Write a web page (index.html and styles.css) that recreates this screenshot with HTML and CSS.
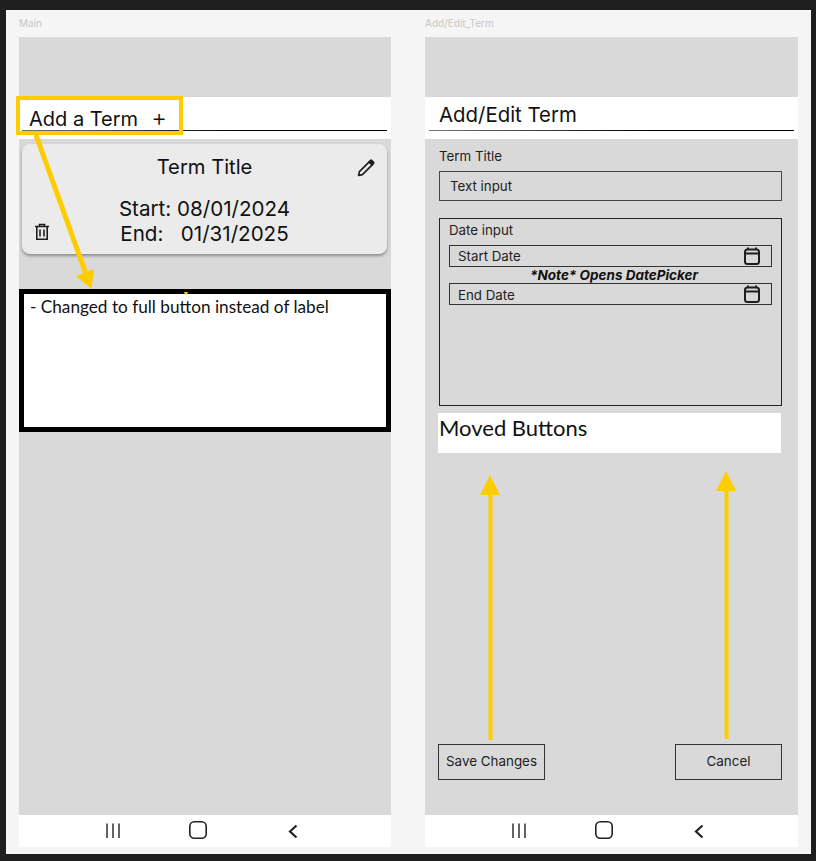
FILE: index.html
```html
<!DOCTYPE html>
<html lang="en">
<head>
    <meta charset="UTF-8">
    <meta name="viewport" content="width=device-width, initial-scale=1.0">
    <title>Term screens</title>
    <link rel="stylesheet" href="styles.css">
</head>
<body>
    <div class="canvas">
        <div class="frame frame-main">
            <div class="frame-name">Main</div>
            <div class="phone">
                <div class="status"></div>
                <div class="header">
                    <div class="header-line">
                        <span class="add-term">Add a Term<span class="plus">+</span></span>
                    </div>
                </div>
                <div class="content">
                    <div class="card">
                        <div class="card-title">Term Title</div>
                        <svg class="icon-edit" width="20" height="20" viewBox="0 0 20 20" fill="none" stroke="#1e1e1e" stroke-width="1.7" stroke-linejoin="round">
                            <path d="M2.6 17.4l.8-3.8 9.8-9.8 3 3-9.8 9.8z"/>
                            <path d="M13.2 3.8l1.2-1.2a1 1 0 0 1 1.4 0l1.6 1.6a1 1 0 0 1 0 1.4l-1.2 1.2z" fill="#1e1e1e"/>
                        </svg>
                        <svg class="icon-trash" width="16" height="18" viewBox="0 0 16 18" fill="none" stroke="#1e1e1e" stroke-width="1.6">
                            <path d="M1 3.5h14M5.5 3.5V1.500h5v2M2.800 3.500v12.700h10.400V3.500M6 6.500v7M10 6.500v7"/>
                        </svg>
                        <div class="card-dates">
                            <div>Start: 08/01/2024</div>
                            <div class="end-date">End:   01/31/2025</div>
                        </div>
                    </div>
                </div>
                <div class="nav">
                    <svg class="nav-icon" width="24" height="24" viewBox="0 0 24 24" fill="none" stroke="#222" stroke-width="1.400"><path d="M6 4.500v14.500M12 4.500v14.500M18 4.500v14.500"/></svg>
                    <svg class="nav-icon nav-home" width="24" height="24" viewBox="0 0 24 24" fill="none" stroke="#222" stroke-width="1.600"><rect x="3.800" y="2.800" width="16.400" height="16.400" rx="4.500"/></svg>
                    <svg class="nav-icon nav-back" width="24" height="24" viewBox="0 0 24 24" fill="none" stroke="#222" stroke-width="2.200"><path d="M15.500 6.500l-6.500 6 6.500 6"/></svg>
                </div>

                <div class="highlight-box"></div>
                <div class="note-box">- Changed to full button instead of label</div>
            </div>
        </div>

        <div class="frame frame-edit">
            <div class="frame-name">Add/Edit_Term</div>
            <div class="phone">
                <div class="status"></div>
                <div class="header">
                    <div class="header-line">
                        <span class="page-title">Add/Edit Term</span>
                    </div>
                </div>
                <div class="content form">
                    <label class="field-label">Term Title</label>
                    <div class="text-input">Text input</div>
                    <div class="date-group">
                        <div class="date-label">Date input</div>
                        <div class="date-input">
                            <span>Start Date</span>
                            <svg width="18" height="18" viewBox="0 0 18 18" fill="none" stroke="#1e1e1e" stroke-width="2"><rect x="2" y="2.500" width="14" height="14.500" rx="2.500"/><path d="M2 6.500h14M5 2.500V0.500M13 2.500V0.500"/></svg>
                        </div>
                        <div class="date-note">*Note* Opens DatePicker</div>
                        <div class="date-input">
                            <span class="end-label">End Date</span>
                            <svg width="18" height="18" viewBox="0 0 18 18" fill="none" stroke="#1e1e1e" stroke-width="2"><rect x="2" y="2.500" width="14" height="14.500" rx="2.500"/><path d="M2 6.500h14M5 2.500V0.500M13 2.500V0.500"/></svg>
                        </div>
                    </div>
                    <div class="form-buttons">
                        <div class="form-button">Save Changes</div>
                        <div class="form-button">Cancel</div>
                    </div>
                </div>
                <div class="nav">
                    <svg class="nav-icon" width="24" height="24" viewBox="0 0 24 24" fill="none" stroke="#222" stroke-width="1.400"><path d="M6 4.500v14.500M12 4.500v14.500M18 4.500v14.500"/></svg>
                    <svg class="nav-icon nav-home" width="24" height="24" viewBox="0 0 24 24" fill="none" stroke="#222" stroke-width="1.600"><rect x="3.800" y="2.800" width="16.400" height="16.400" rx="4.500"/></svg>
                    <svg class="nav-icon nav-back" width="24" height="24" viewBox="0 0 24 24" fill="none" stroke="#222" stroke-width="2.200"><path d="M15.500 6.500l-6.500 6 6.500 6"/></svg>
                </div>

                <div class="moved-box">Moved Buttons</div>
            </div>
        </div>

        <!-- arrows drawn on top of both frames, page coordinates minus canvas offset -->
        <svg class="arrows" width="805" height="844" viewBox="6 10 805 844" fill="#ffcc00" stroke="none">
            <path d="M36 135L86 274" stroke="#ffcc00" stroke-width="5"/>
            <path d="M76 276L94 269L91.500 289z"/>
            <path d="M184 292h4l-1 2.500h-2z"/>
            <path d="M490.500 740V494" stroke="#ffcc00" stroke-width="4"/>
            <path d="M490 475L500 495H480z"/>
            <path d="M726.500 739V490" stroke="#ffcc00" stroke-width="4"/>
            <path d="M726 471L736 491H716z"/>
        </svg>
    </div>
</body>
</html>
```

FILE: styles.css
```css
body {
    margin: 0;
    height: 861px;
    overflow: hidden;
    background-color: #1e1e1e;
    font-family: Inter, "Liberation Sans", sans-serif;
    color: #1e1e1e;
}
.canvas {
    position: relative;
    display: flex;
    gap: 34px;
    margin: 10px 5px 0 6px;
    padding-left: 13px;
    height: 844px;
    background-color: #f5f5f5;
}
.frame {
    width: 372px;
}
.frame-edit {
    width: 373px;
}
.frame-name {
    height: 27px;
    line-height: 27px;
    font-size: 10px;
    color: #c8c8c8;
}
.phone {
    position: relative;
    display: flex;
    flex-direction: column;
    height: 810px;
    background-color: #d9d9d9;
}
.status {
    height: 60px;
}
.header {
    height: 42px;
    padding: 0 4px 0 3px;
    box-sizing: border-box;
    background-color: #fff;
}
.frame-edit .header {
    padding: 0 4px;
}
.header-line {
    height: 34px;
    box-sizing: border-box;
    background: linear-gradient(to right, #777, #000 60%) bottom / 100% 1px no-repeat;
}
.add-term {
    display: block;
    padding: 9px 0 0 7px;
    font-size: 20px;
    line-height: 26px;
    color: #111;
}
.plus {
    margin-left: 13px;
    font-size: 24px;
    font-weight: 300;
    line-height: 20px;
}
.page-title {
    display: block;
    padding: 5px 0 0 10px;
    font-size: 20.400px;
    line-height: 26px;
    color: #111;
}
.content {
    flex: 1;
    display: flex;
    flex-direction: column;
}
.card {
    display: grid;
    grid-template-columns: 40px 1fr 40px;
    grid-template-rows: 46px 1fr;
    height: 110px;
    box-sizing: border-box;
    margin: 5px 4px 0 3px;
    background-color: #ebebeb;
    border-radius: 8px;
    box-shadow: 0 2px 3px rgba(0, 0, 0, 0.35);
}
.card-title {
    grid-column: 2;
    grid-row: 1;
    padding-top: 10px;
    font-size: 20.200px;
    line-height: 26px;
    text-align: center;
    color: #111;
}
.icon-edit {
    grid-column: 3;
    grid-row: 1;
    margin: 14px 0 0 9px;
}
.icon-trash {
    grid-column: 1;
    grid-row: 2;
    align-self: end;
    margin: 0 0 13px 12px;
}
.card-dates {
    grid-column: 2;
    grid-row: 2;
    padding-top: 6px;
    font-size: 20.600px;
    line-height: 25px;
    text-align: center;
    color: #111;
}
.end-date {
    white-space: pre;
}
.nav {
    display: flex;
    align-items: center;
    height: 32px;
    margin-top: 1px;
    padding-left: 82px;
    background-color: #fff;
}
.nav-icon {
    flex: none;
}
.nav-home {
    margin-left: 61px;
}
.nav-back {
    margin-left: 71px;
}
.form {
    padding: 9px 16px 34px 13px;
}
.field-label {
    margin-left: 1px;
    font-size: 13.300px;
    line-height: 16px;
}
.text-input {
    margin: 7px 0 0 1px;
    height: 30px;
    box-sizing: border-box;
    padding-left: 10px;
    border: 1px solid #444;
    font-size: 13.300px;
    line-height: 28px;
}
.date-group {
    display: flex;
    flex-direction: column;
    height: 188px;
    box-sizing: border-box;
    margin: 17px 0 0 1px;
    padding: 3px 9px 0;
    border: 1px solid #222;
}
.date-label {
    height: 23px;
    font-size: 13.300px;
    line-height: 16px;
}
.date-input {
    display: flex;
    align-items: center;
    justify-content: space-between;
    height: 22px;
    box-sizing: border-box;
    padding: 0 10px 0 8px;
    border: 1px solid #333;
    font-size: 13.300px;
}
.end-label {
    padding-top: 1px;
}
.date-note {
    height: 16px;
    padding-left: 7px;
    font-size: 13.500px;
    font-weight: 700;
    font-style: italic;
    line-height: 16px;
    text-align: center;
    color: #111;
}
.form-buttons {
    display: flex;
    justify-content: space-between;
    margin-top: auto;
}
.form-button {
    width: 107px;
    height: 36px;
    box-sizing: border-box;
    border: 1px solid #333;
    font-size: 13.400px;
    line-height: 33px;
    text-align: center;
}
.highlight-box {
    position: absolute;
    left: -3px;
    top: 59px;
    width: 167px;
    height: 39px;
    box-sizing: border-box;
    border: 4px solid #ffcc00;
}
.note-box {
    position: absolute;
    left: 0;
    top: 252px;
    width: 372px;
    height: 143px;
    box-sizing: border-box;
    padding: 2px 6px;
    border: 5px solid #000;
    background-color: #fff;
    font-family: Lato, "Open Sans", sans-serif;
    font-size: 17.200px;
    line-height: 22px;
    color: #111;
}
.moved-box {
    position: absolute;
    left: 13px;
    top: 376px;
    width: 343px;
    height: 40px;
    box-sizing: border-box;
    padding-left: 1px;
    background-color: #fff;
    font-family: Lato, "Open Sans", sans-serif;
    font-size: 22px;
    line-height: 30px;
    color: #111;
}
.arrows {
    position: absolute;
    left: 0;
    top: 0;
    pointer-events: none;
}
```
